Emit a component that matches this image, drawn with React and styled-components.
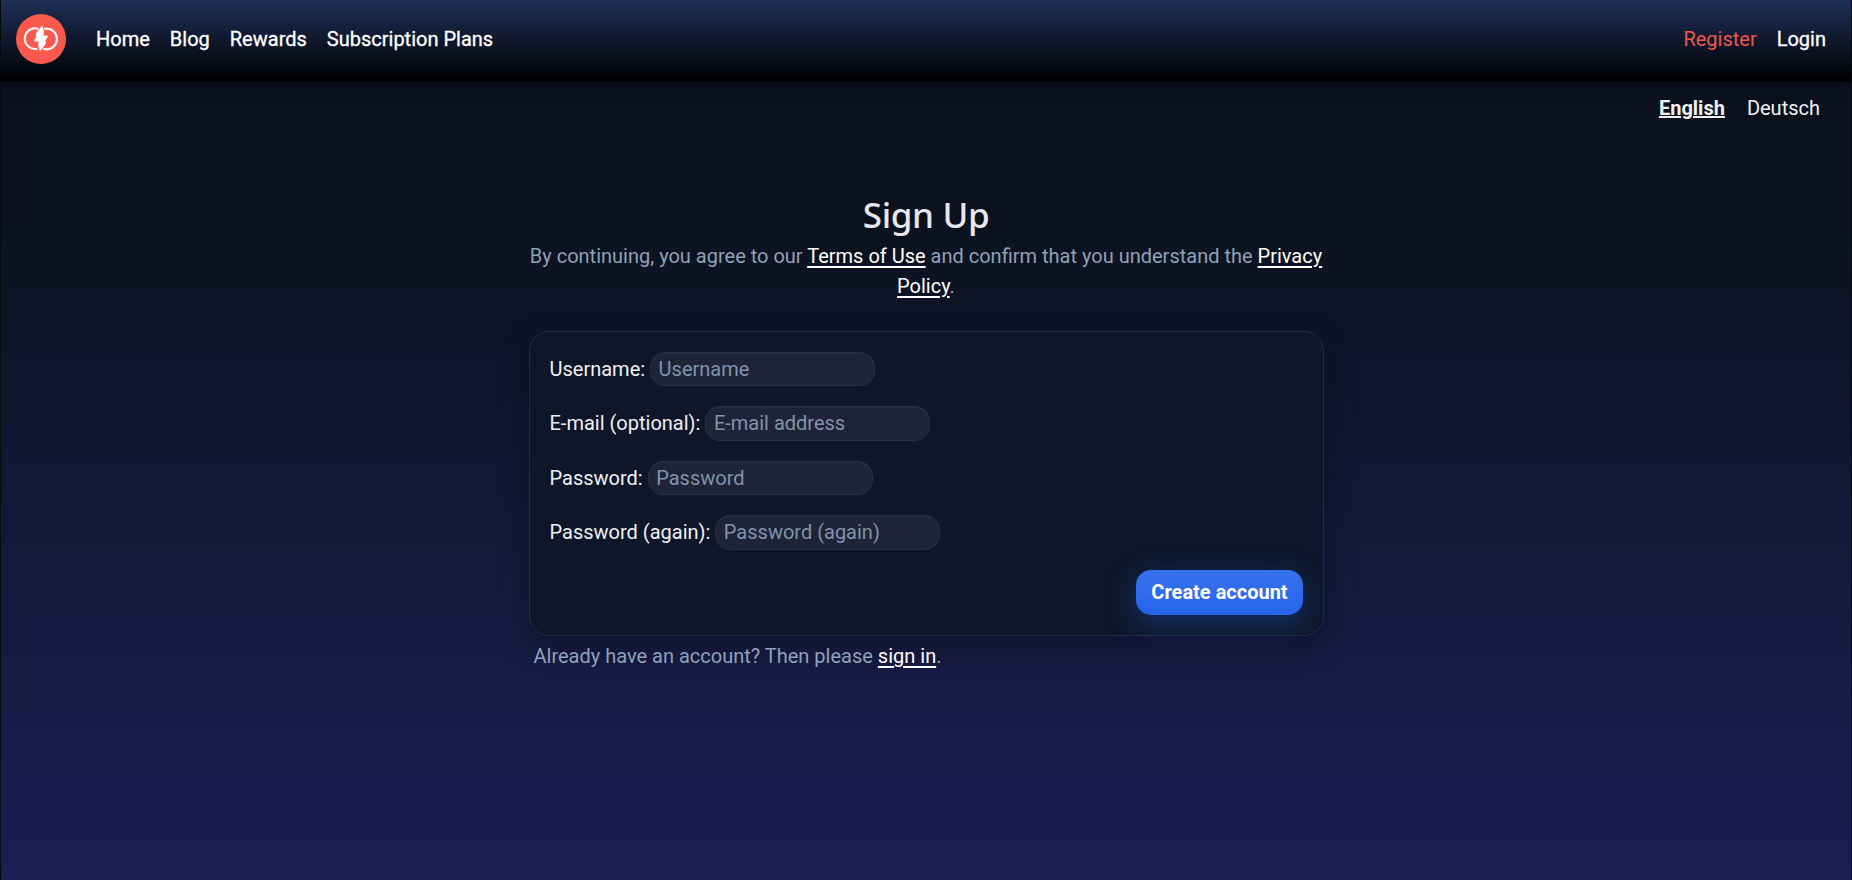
import React from "react";
import styled, { createGlobalStyle } from "styled-components";

const Global = createGlobalStyle`
  * { box-sizing: border-box; }
  body {
    margin: 0;
    background: #0b111d;
    font-family: Roboto, "Liberation Sans", sans-serif;
    font-size: 20px;
    line-height: 30px;
    color: #f0f0f2;
  }
`;

const Page = styled.div`
  height: 880px;
  padding: 0 1px;
  background: #090a0d;
`;

const Shell = styled.div`
  height: 880px;
  display: flex;
  flex-direction: column;
  background: linear-gradient(180deg, #0b121e 0, #0b121e 220px, #1c1e54 100%);
`;

const Header = styled.header`
  height: 82px;
  flex: none;
  display: flex;
  align-items: flex-start;
  padding: 14px 25px 0 15px;
  background: linear-gradient(180deg, #1e2f57 0%, #000 100%);
  box-shadow: 0 2px 16px rgba(0, 0, 0, 0.3);
`;

const Logo = styled.svg`
  width: 50px;
  height: 50px;
  margin-right: 30px;
`;

const Nav = styled.nav`
  display: flex;
  gap: 20px;
  padding-top: 10px;
  margin-left: ${(p) => (p.$end ? "auto" : "0")};
`;

const NavLink = styled.a`
  color: ${(p) => (p.$accent ? "#f0574c" : "#fff")};
  -webkit-text-stroke: ${(p) => (p.$accent ? "0" : "0.3px #fff")};
`;

const Languages = styled.div`
  display: flex;
  justify-content: flex-end;
  gap: 22px;
  padding: 11px 31px 0 0;
`;

const Language = styled.a`
  font-weight: ${(p) => (p.$active ? 700 : 400)};
  text-decoration: ${(p) => (p.$active ? "underline" : "none")};
`;

const Main = styled.main`
  width: 795px;
  margin: 71px auto 0;
`;

const Title = styled.h1`
  margin: 0;
  font-family: "Noto Sans", sans-serif;
  font-weight: 500;
  font-size: 35px;
  line-height: 42px;
  letter-spacing: -0.35px;
  text-align: center;
  color: #e6e8ee;
`;

const Intro = styled.p`
  margin: 5px 0 30px;
  text-align: center;
  color: #8fa1b9;
`;

const TextLink = styled.a`
  color: #fff;
  text-decoration: underline;
  text-decoration-thickness: 2px;
  text-underline-offset: 3px;
`;

const Card = styled.form`
  height: 305px;
  padding: 19.85px 20px 20px;
  display: flex;
  flex-direction: column;
  border: 1px solid #222d3c;
  border-radius: 20px;
  background: #0e1729;
  box-shadow: 0 10px 30px rgba(0, 0, 0, 0.3);
`;

const Field = styled.label`
  height: 34.4px;
  margin-bottom: 20px;
  flex: none;
  display: flex;
  align-items: center;
  gap: 5px;
`;

const Input = styled.input`
  width: 225px;
  height: 34.6px;
  padding: 0 7.5px;
  border: 1px solid #263142;
  border-radius: 15px;
  background: #1e2335;
  box-shadow: inset 0 1px 1px rgba(38, 49, 66, 0.7);
  font: inherit;
  color: #f0f0f2;
  &::placeholder { color: #8193ac; }
`;

const Submit = styled.button`
  align-self: flex-end;
  width: 167px;
  height: 45px;
  flex: none;
  margin-top: auto;
  padding: 0 0 1px 1px;
  border: 0;
  border-radius: 15px;
  background: linear-gradient(180deg, #3871ec, #2563eb);
  box-shadow: 0 8px 30px rgba(37, 99, 235, 0.35);
  color: #fff;
  font: inherit;
  font-weight: 700;
`;

const Footnote = styled.p`
  margin: 5px 0 0 5px;
  color: #8fa1b9;
`;

const fields = [
  ["Username:", "Username", "text"],
  ["E-mail (optional):", "E-mail address", "email"],
  ["Password:", "Password", "password"],
  ["Password (again):", "Password (again)", "password"],
];

export default function App() {
  return (
    <Page>
      <Global />
      <Shell>
        <Header>
          <Logo viewBox="0 0 50 50">
            <circle cx="25" cy="25" r="25" fill="#fb594d" />
            <g fill="none" stroke="#fff" strokeWidth="2.1">
              <path d="M22.4 14.9A10.3 10.3 0 1 0 21.4 34.7" />
              <path d="M28.4 14.9A10.3 10.3 0 1 1 27.2 34.7" />
            </g>
            <path
              d="M26.3 11.5L19.8 19.2L20.2 22.8L17.8 27.2L22.8 27.8L22 31L24 37.5L30 29.5L29.5 26.5L32.3 21.8L27.4 21.4L28.2 17.5Z"
              fill="#fff"
            />
          </Logo>
          <Nav>
            <NavLink>Home</NavLink>
            <NavLink>Blog</NavLink>
            <NavLink>Rewards</NavLink>
            <NavLink>Subscription Plans</NavLink>
          </Nav>
          <Nav $end>
            <NavLink $accent>Register</NavLink>
            <NavLink>Login</NavLink>
          </Nav>
        </Header>
        <Languages>
          <Language $active>English</Language>
          <Language>Deutsch</Language>
        </Languages>
        <Main>
          <Title>Sign Up</Title>
          <Intro>
            By continuing, you agree to our <TextLink>Terms of Use</TextLink> and confirm that you
            understand the <TextLink>Privacy Policy</TextLink>.
          </Intro>
          <Card>
            {fields.map(([label, placeholder, type]) => (
              <Field key={label}>
                {label}
                <Input type={type} placeholder={placeholder} />
              </Field>
            ))}
            <Submit type="button">Create account</Submit>
          </Card>
          <Footnote>
            Already have an account? Then please <TextLink>sign in</TextLink>.
          </Footnote>
        </Main>
      </Shell>
    </Page>
  );
}
